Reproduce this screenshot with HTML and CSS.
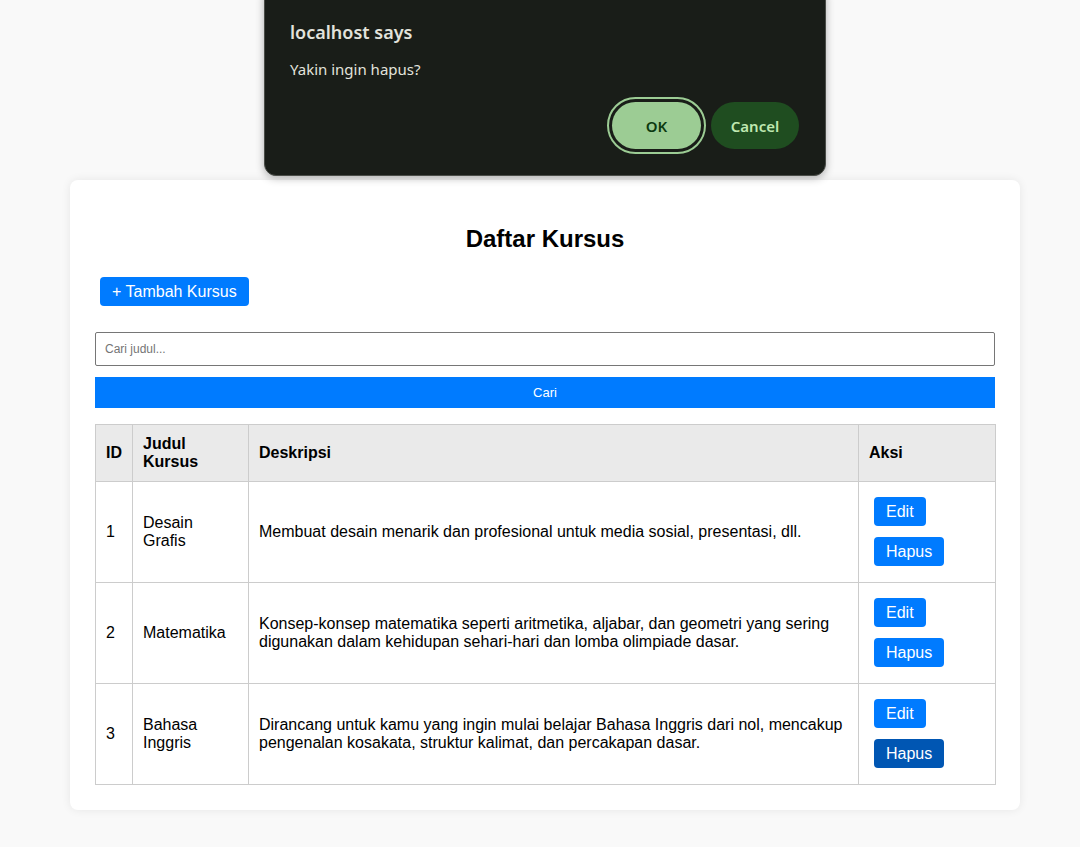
FILE: index.html
```html
<!DOCTYPE html>
<html lang="id">
<head>
<meta charset="utf-8">
<title>Daftar Kursus</title>
<link rel="stylesheet" href="styles.css">
</head>
<body>
<div class="container">
  <h2 class="title">Daftar Kursus</h2>
  <div class="actions"><a class="btn">+ Tambah Kursus</a></div>
  <form class="search">
    <input class="search-input" type="text" placeholder="Cari judul...">
    <button class="search-btn" type="button">Cari</button>
  </form>
  <table class="table">
    <colgroup>
      <col class="c-id"><col class="c-judul"><col class="c-desc"><col class="c-aksi">
    </colgroup>
    <thead>
      <tr><th>ID</th><th>Judul Kursus</th><th>Deskripsi</th><th>Aksi</th></tr>
    </thead>
    <tbody>
      <tr>
        <td>1</td><td>Desain Grafis</td>
        <td>Membuat desain menarik dan profesional untuk media sosial, presentasi, dll.</td>
        <td><a class="btn">Edit</a><a class="btn">Hapus</a></td>
      </tr>
      <tr>
        <td>2</td><td>Matematika</td>
        <td>Konsep-konsep matematika seperti aritmetika, aljabar, dan geometri yang sering digunakan dalam kehidupan sehari-hari dan lomba olimpiade dasar.</td>
        <td><a class="btn">Edit</a><a class="btn">Hapus</a></td>
      </tr>
      <tr>
        <td>3</td><td>Bahasa Inggris</td>
        <td>Dirancang untuk kamu yang ingin mulai belajar Bahasa Inggris dari nol, mencakup pengenalan kosakata, struktur kalimat, dan percakapan dasar.</td>
        <td><a class="btn">Edit</a><a class="btn btn-hover">Hapus</a></td>
      </tr>
    </tbody>
  </table>
</div>

<div class="dialog">
  <div class="dialog-title">localhost says</div>
  <div class="dialog-msg">Yakin ingin hapus?</div>
  <div class="dialog-buttons">
    <span class="dbtn-ring"><button class="dbtn dbtn-ok" type="button">OK</button></span>
    <button class="dbtn dbtn-cancel" type="button">Cancel</button>
  </div>
</div>
</body>
</html>
```
FILE: styles.css
```css
* { box-sizing: border-box; }
html, body { margin: 0; padding: 0; }
body {
  background: #f9f9f9;
  font-family: "Liberation Sans", Arial, sans-serif;
  color: #000;
  padding-top: 180px;
  padding-bottom: 37px;
}
.container {
  width: 950px;
  margin: 0 auto 0 70px;
  background: #fff;
  border-radius: 8px;
  padding: 25px;
  box-shadow: 0 0 10px rgba(0,0,0,0.08);
}
.title {
  font-size: 24px;
  font-weight: bold;
  text-align: center;
  margin: 20px 0 19px;
  line-height: 28px;
}
.actions { line-height: 18px; }
.btn {
  display: inline-block;
  background: #007bff;
  color: #fff;
  font-size: 16px;
  line-height: 19px;
  padding: 5px 12px;
  margin: 5px 5px 6px;
  border-radius: 4px;
  text-decoration: none;
  cursor: pointer;
}
.btn-hover { background: #0056b3; }
.search { margin: 20px 0 16px; }
.search-input {
  display: block;
  width: 100%;
  height: 34px;
  padding: 8px 9px;
  border: 1px solid #767676;
  border-radius: 2px;
  font-family: "Liberation Sans", Arial, sans-serif;
  font-size: 12px;
  margin: 0 0 11px;
}
.search-input::placeholder { color: #757575; }
.search-btn {
  display: block;
  width: 100%;
  height: 31px;
  background: #007bff;
  color: #fff;
  border: none;
  font-family: "Liberation Sans", Arial, sans-serif;
  font-size: 13px;
  padding: 0;
}
.table {
  width: 900px;
  border-collapse: collapse;
  table-layout: fixed;
}
.c-id { width: 37px; }
.c-judul { width: 116px; }
.c-desc { width: 610px; }
.c-aksi { width: 137px; }
.table th, .table td {
  border: 1px solid #ccc;
  padding: 10px;
  text-align: left;
  vertical-align: middle;
  font-size: 16px;
  line-height: 18px;
}
.table th { background: #eaeaea; font-weight: bold; height: 57px; }
.table td { height: 101px; }

.dialog {
  position: absolute;
  top: -14px;
  left: 264px;
  width: 562px;
  height: 190px;
  background: #191d18;
  border: 1px solid #4a4d48;
  border-radius: 12px;
  box-shadow: 0 2px 8px rgba(0,0,0,0.3);
  padding: 33px 26px 0 25px;
  font-family: "Noto Sans", "Open Sans", sans-serif;
  color: #e2e3dc;
}
.dialog-title {
  font-size: 18px;
  font-weight: 600;
  line-height: 24px;
}
.dialog-msg {
  font-size: 15px;
  line-height: 20px;
  margin-top: 15px;
}
.dialog-buttons {
  display: flex;
  justify-content: flex-end;
  align-items: center;
  gap: 5px;
  margin-top: 18px;
}
.dbtn-ring {
  display: inline-flex;
  border: 2px solid #9ccc94;
  border-radius: 30px;
  padding: 3px;
}
.dbtn {
  border: none;
  border-radius: 24px;
  height: 47px;
  font-family: "Noto Sans", "Open Sans", sans-serif;
  font-size: 15px;
  font-weight: 600;
}
.dbtn-ok {
  width: 89px;
  background: #9ccc94;
  color: #0c3a10;
}
.dbtn-cancel {
  width: 88px;
  background: #1f4d20;
  color: #bfe8b0;
}
```
